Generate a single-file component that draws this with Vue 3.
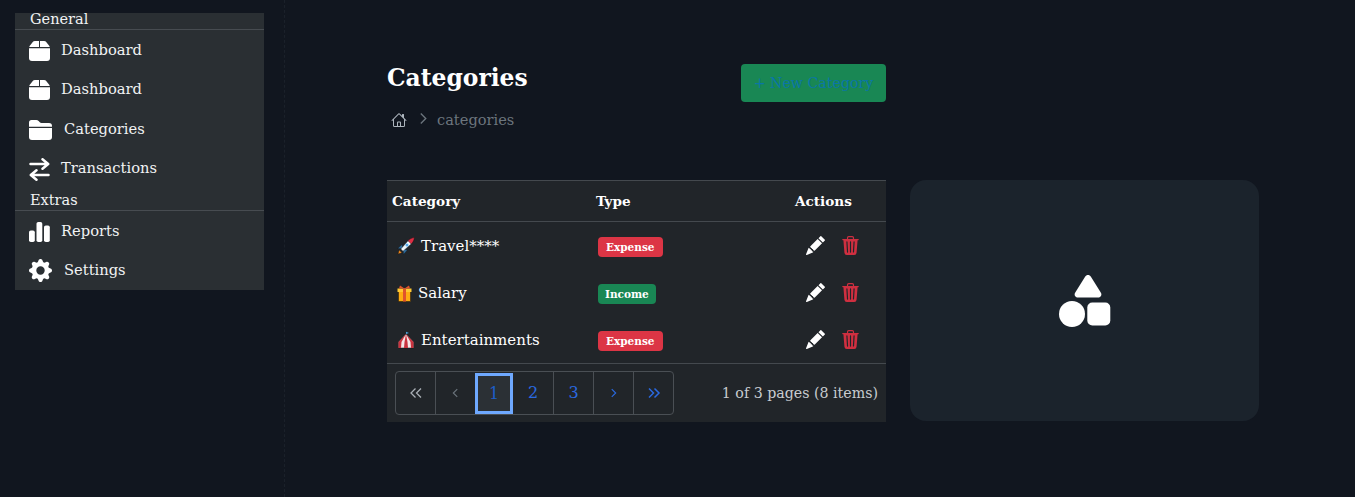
<script setup>
const menuGeneral = [
  { label: 'Dashboard', icon: 'box' },
  { label: 'Dashboard', icon: 'box' },
  { label: 'Categories', icon: 'folder' },
  { label: 'Transactions', icon: 'swap' },
]
const menuExtras = [
  { label: 'Reports', icon: 'bars' },
  { label: 'Settings', icon: 'gear' },
]
const rows = [
  { emoji: 'rocket', name: 'Travel****', type: 'Expense' },
  { emoji: 'gift', name: 'Salary', type: 'Income' },
  { emoji: 'tent', name: 'Entertainments', type: 'Expense' },
]
</script>

<template>
  <div class="page">
    <aside class="side">
      <nav class="menu">
        <div class="menu-title first">General</div>
        <a v-for="(m, i) in menuGeneral" :key="i" class="menu-item" :class="m.icon">
          <svg v-if="m.icon === 'box'" class="menu-icon" viewBox="0 0 21 20" fill="currentColor">
            <path d="M4.200.6C4.600.2 5.200 0 5.800 0H10v6H.3c.1-.7.400-1.300.9-1.800z" />
            <path d="M11 0h4.200c.6 0 1.200.2 1.600.6l3 3.600c.5.5.8 1.100.9 1.800H11z" />
            <path d="M0 7.200h21V17a3 3 0 0 1-3 3H3a3 3 0 0 1-3-3z" />
          </svg>
          <svg v-else-if="m.icon === 'folder'" class="menu-icon" viewBox="0 0 23 20" fill="currentColor">
            <path d="M0 2.500A2.500 2.500 0 0 1 2.500 0h4.800c.9 0 1.700.4 2.300 1l1.200 1.300c.4.500 1 .7 1.600.7h7.600A3 3 0 0 1 23 6v.8H0z" />
            <path d="M0 8h23v9a3 3 0 0 1-3 3H3a3 3 0 0 1-3-3z" />
          </svg>
          <svg v-else class="menu-icon" viewBox="0 0 21 23" fill="none" stroke="currentColor" stroke-width="2.500" stroke-linecap="round" stroke-linejoin="round">
            <path d="M1.500 6h17.500M13.500 1.300 19.200 6l-5.700 4.700" />
            <path d="M19.500 17H2M7.500 12.300 1.800 17l5.700 4.700" />
          </svg>
          <span>{{ m.label }}</span>
        </a>
        <div class="menu-title">Extras</div>
        <a v-for="(m, i) in menuExtras" :key="i" class="menu-item" :class="m.icon">
          <svg v-if="m.icon === 'bars'" class="menu-icon" viewBox="0 0 21 20" fill="currentColor">
            <rect x="0" y="8.500" width="5.800" height="11.500" rx="1.800" />
            <rect x="7.500" y="0" width="5.800" height="20" rx="1.800" />
            <rect x="15" y="3.500" width="5.800" height="16.500" rx="1.800" />
          </svg>
          <svg v-else class="menu-icon" viewBox="0 0 16 16" fill="currentColor">
            <path d="M9.405 1.050c-.413-1.400-2.397-1.400-2.810 0l-.1.340a1.464 1.464 0 0 1-2.105.872l-.31-.17c-1.283-.698-2.686.705-1.987 1.987l.169.311c.446.820.023 1.841-.872 2.105l-.34.100c-1.400.413-1.400 2.397 0 2.810l.34.100a1.464 1.464 0 0 1 .872 2.105l-.17.310c-.698 1.283.705 2.686 1.987 1.987l.311-.169a1.464 1.464 0 0 1 2.105.872l.1.340c.413 1.400 2.397 1.400 2.810 0l.1-.340a1.464 1.464 0 0 1 2.105-.872l.31.170c1.283.698 2.686-.705 1.987-1.987l-.169-.311a1.464 1.464 0 0 1 .872-2.105l.34-.100c1.400-.413 1.400-2.397 0-2.810l-.34-.100a1.464 1.464 0 0 1-.872-2.105l.17-.310c.698-1.283-.705-2.686-1.987-1.987l-.311.169a1.464 1.464 0 0 1-2.105-.872l-.1-.340zM8 10.930a2.929 2.929 0 1 1 0-5.860 2.929 2.929 0 0 1 0 5.858z" />
          </svg>
          <span>{{ m.label }}</span>
        </a>
      </nav>
    </aside>

    <main class="content">
      <div class="list-col">
        <header class="head">
          <div>
            <h1 class="title">Categories</h1>
            <div class="crumbs">
              <svg class="home" viewBox="0 0 16 16" fill="currentColor">
                <path d="M8.707 1.500a1 1 0 0 0-1.414 0L.646 8.146a.5.5 0 0 0 .708.708L2 8.207V13.500A1.500 1.500 0 0 0 3.500 15h9a1.500 1.500 0 0 0 1.500-1.500V8.207l.646.647a.5.5 0 0 0 .708-.708L13 5.793V2.500a.5.5 0 0 0-.5-.5h-1a.5.5 0 0 0-.5.5v1.293L8.707 1.500ZM13 7.207V13.500a.5.5 0 0 1-.5.5H10v-3.500a1 1 0 0 0-1-1H7a1 1 0 0 0-1 1V14H3.500a.5.5 0 0 1-.5-.5V7.207l5-5 5 5ZM9 14H7v-3.500h2V14Z" />
              </svg>
              <svg class="sep" viewBox="0 0 10 14" fill="none" stroke="currentColor" stroke-width="1.500">
                <path d="M2 1.500 7.500 7 2 12.500" />
              </svg>
              <span>categories</span>
            </div>
          </div>
          <button class="new-btn">+ New Category</button>
        </header>

        <section class="table-wrap">
          <table class="grid">
            <colgroup>
              <col class="c1" />
              <col class="c2" />
              <col />
            </colgroup>
            <thead>
              <tr>
                <th>Category</th>
                <th>Type</th>
                <th>Actions</th>
              </tr>
            </thead>
            <tbody>
              <tr v-for="r in rows" :key="r.name">
                <td class="name-cell">
                  <svg v-if="r.emoji === 'rocket'" class="emoji" viewBox="0 0 18 18">
                    <path d="M1 17l1.200-4 2.800 2.800z" fill="#f28a1e" stroke="#111" stroke-width=".4" />
                    <path d="M.6 11.500 5 7.500l1 4.500zM6.500 17.400l4-4.400-4.500-1z" fill="#2f6d9e" stroke="#111" stroke-width=".4" />
                    <path d="M3.800 12 11 3.800 14.200 3.800 14.200 7 6 14.200z" fill="#eef6fb" stroke="#111" stroke-width=".4" />
                    <path d="M11 3.800C12.500 2 15 .8 17.400.6 17.200 3 16 5.500 14.200 7z" fill="#dd2e44" stroke="#111" stroke-width=".4" />
                    <circle cx="10" cy="8" r="1.500" fill="#55acee" />
                  </svg>
                  <svg v-else-if="r.emoji === 'gift'" class="emoji gift" viewBox="0 0 15 18">
                    <rect x="1.500" y="7" width="12" height="10.500" fill="#ffac12" stroke="#201405" stroke-width=".5" />
                    <rect x=".5" y="4.500" width="14" height="3.500" fill="#ffc933" />
                    <rect x="6" y="4.500" width="3" height="13" fill="#e0532d" />
                    <path d="M7.500 4.500 3 1.500 2 4.500zM7.500 4.500 12 1.500l1 3z" fill="#e0532d" />
                  </svg>
                  <svg v-else class="emoji" viewBox="0 0 18 18">
                    <path d="M9 3 16.500 11v6h-15v-6z" fill="#f3e6e6" stroke="#111" stroke-width=".5" />
                    <path d="M9 3 4.500 11 4 17H1.500v-6zM9 3 13.500 11l.5 6h2.500v-6zM9 3 7.500 11 7 17h4l-.5-6z" fill="#c8333f" />
                    <path d="M9 3V.8l3 1.200-3 1" fill="#4aa8dd" />
                  </svg>
                  <span>{{ r.name }}</span>
                </td>
                <td>
                  <span class="badge" :class="r.type === 'Income' ? 'income' : 'expense'">{{ r.type }}</span>
                </td>
                <td>
                  <div class="actions">
                    <svg class="act edit" viewBox="0 0 16 16" fill="currentColor">
                      <path d="M12.854.146a.5.5 0 0 0-.707 0L10.500 1.793 14.207 5.500l1.647-1.646a.5.5 0 0 0 0-.708l-3-3zm.646 6.061L9.793 2.500 3.293 9H3.500a.5.5 0 0 1 .5.5v.5h.5a.5.5 0 0 1 .5.5v.5h.5a.5.5 0 0 1 .5.5v.5h.5a.5.5 0 0 1 .5.5v.207l6.500-6.500zm-7.468 7.468A.5.5 0 0 1 6 13.500V13h-.5a.5.5 0 0 1-.5-.5V12h-.5a.5.5 0 0 1-.5-.5V11h-.5a.5.5 0 0 1-.5-.5V10h-.5a.499.499 0 0 1-.175-.032l-.179.178a.5.5 0 0 0-.11.168l-2 5a.5.5 0 0 0 .65.65l5-2a.5.5 0 0 0 .168-.11l.178-.178z" />
                    </svg>
                    <svg class="act del" viewBox="0 0 16 16" fill="currentColor">
                      <path d="M11 1.500v1h3.500a.5.5 0 0 1 0 1h-.538l-.853 10.660A2 2 0 0 1 11.115 16h-6.230a2 2 0 0 1-1.994-1.840L2.038 3.500H1.500a.5.5 0 0 1 0-1H5v-1A1.500 1.500 0 0 1 6.500 0h3A1.500 1.500 0 0 1 11 1.500Zm-5 0v1h4v-1a.5.5 0 0 0-.5-.5h-3a.5.5 0 0 0-.5.5ZM4.500 5.029l.5 8.500a.5.5 0 1 0 .998-.06l-.5-8.500a.5.5 0 1 0-.998.06Zm6.530-.528a.5.5 0 0 0-.528.47l-.5 8.500a.5.5 0 0 0 .998.058l.5-8.500a.5.5 0 0 0-.47-.528ZM8 4.500a.5.5 0 0 0-.5.5v8.500a.5.5 0 0 0 1 0V5a.5.5 0 0 0-.5-.5Z" />
                    </svg>
                  </div>
                </td>
              </tr>
            </tbody>
          </table>
          <footer class="foot">
            <div class="pager">
              <span class="pg grey">
                <svg viewBox="0 0 14 12" fill="none" stroke="currentColor" stroke-width="1.300"><path d="M6.500 1.500 2 6l4.500 4.500M12 1.500 7.500 6l4.500 4.500" /></svg>
              </span>
              <span class="pg dim">
                <svg class="single" viewBox="0 0 8 12" fill="none" stroke="currentColor" stroke-width="1.300"><path d="M6 1.500 1.500 6 6 10.500" /></svg>
              </span>
              <span class="pg active">1</span>
              <span class="pg first-num">2</span>
              <span class="pg">3</span>
              <span class="pg">
                <svg class="single" viewBox="0 0 8 12" fill="none" stroke="currentColor" stroke-width="1.300"><path d="M2 1.500 6.500 6 2 10.500" /></svg>
              </span>
              <span class="pg">
                <svg viewBox="0 0 14 12" fill="none" stroke="currentColor" stroke-width="1.500"><path d="M2 1.500 6.500 6 2 10.500M7.500 1.500 12 6l-4.500 4.500" /></svg>
              </span>
            </div>
            <span class="pages">1 of 3 pages (8 items)</span>
          </footer>
        </section>
      </div>

      <section class="promo">
        <svg class="shapes" viewBox="0 0 52 52" fill="#fff">
          <path transform="translate(3 0)" d="M26 0c1.200 0 2.200.6 2.900 1.700l10 16c1.300 2.200-.2 4.800-2.700 4.800h-20.400c-2.500 0-4-2.600-2.700-4.800l10-16C23.800.6 24.800 0 26 0z" />
          <circle cx="13" cy="39" r="13" />
          <rect x="28.300" y="27.500" width="23" height="23" rx="5" />
        </svg>
      </section>
    </main>
  </div>
</template>

<style scoped>
.page {
  display: flex;
  align-items: flex-start;
  min-height: 497px;
  background: #11161f;
  color: #fff;
  font-family: "Roboto Slab", "DejaVu Serif", serif;
  overflow: hidden;
}
.side {
  width: 285px;
  flex-shrink: 0;
  box-sizing: border-box;
  padding: 13px 20px 0 15px;
  border-right: 1px dashed #1b212a;
  height: 497px;
}
.menu {
  background: #2a2f33;
  height: 277px;
  overflow: hidden;
  display: flex;
  flex-direction: column;
}
.menu-title {
  font-size: 14.500px;
  line-height: 20px;
  height: 21px;
  flex-shrink: 0;
  box-sizing: border-box;
  padding-left: 15px;
  margin-top: 2px;
  border-bottom: 1px solid #474c51;
  color: #f1f3f4;
}
.menu-title.first {
  height: 17px;
  line-height: 13px;
  margin-top: 0;
}
.menu-item {
  display: flex;
  align-items: center;
  gap: 11px;
  height: 39.500px;
  flex-shrink: 0;
  padding-left: 14px;
  font-size: 14.700px;
  color: #f1f3f4;
}
.menu-item span {
  margin-top: -1px;
}
.menu-item.folder,
.menu-item.gear {
  gap: 12px;
}
.menu-icon {
  width: 21px;
  height: 20px;
  margin-top: 2px;
  color: #fff;
}
.folder .menu-icon {
  width: 23px;
}
.swap .menu-icon {
  height: 23px;
}
.gear .menu-icon {
  width: 23px;
  height: 23px;
  margin-top: 0;
}
.content {
  display: flex;
  gap: 24px;
  padding: 64px 0 0 102px;
  align-items: flex-start;
}
.list-col {
  width: 499px;
}
.head {
  display: flex;
  justify-content: space-between;
  align-items: flex-start;
  height: 116px;
}
.title {
  margin: 0;
  font-size: 23.400px;
  line-height: 29px;
  font-weight: 700;
}
.crumbs {
  display: flex;
  align-items: center;
  margin: 18px 0 0 4px;
  font-size: 14.600px;
  color: #6c757d;
}
.home {
  width: 16px;
  height: 16px;
  margin-right: 12px;
  color: #adb5bd;
}
.sep {
  width: 9px;
  height: 13px;
  margin: -3px 9px 0 0;
}
.new-btn {
  width: 145px;
  height: 38px;
  border: none;
  border-radius: 4px;
  background: #198754;
  color: #0a76a6;
  font-family: inherit;
  font-size: 14.200px;
  padding: 0;
}
.table-wrap {
  background: #212529;
}
.grid {
  width: 100%;
  table-layout: fixed;
  border-collapse: collapse;
  font-size: 14px;
}
.c1 {
  width: 204px;
}
.c2 {
  width: 199px;
}
.grid th {
  text-align: left;
  font-weight: 700;
  font-size: 13.600px;
  height: 41px;
  padding: 0 0 0 5px;
  border-top: 1px solid #44494e;
  border-bottom: 1px solid #44494e;
  box-sizing: border-box;
}
.grid td {
  height: 47px;
  padding: 0 0 0 7px;
  box-sizing: border-box;
}
.name-cell span {
  vertical-align: middle;
}
.grid td.name-cell {
  padding-left: 10px;
  font-size: 15px;
}
.emoji {
  width: 18px;
  height: 18px;
  margin-right: 6px;
  vertical-align: middle;
}
.emoji.gift {
  width: 15px;
}
.badge {
  display: inline-block;
  font-size: 10.500px;
  font-weight: 700;
  line-height: 20px;
  height: 20px;
  margin-top: 3px;
  padding: 0 8px;
  border-radius: 4px;
}
.expense {
  background: #dc3545;
}
.income {
  background: #198754;
  padding: 0 7px;
}
.actions {
  display: flex;
  align-items: center;
  gap: 16px;
  padding-left: 9px;
}
.act {
  width: 19px;
  height: 19px;
}
.edit {
  color: #fff;
}
.del {
  color: #cf2f40;
}
.foot {
  height: 59px;
  border-top: 1px solid #44494e;
  display: flex;
  align-items: center;
  justify-content: space-between;
  padding: 0 8px;
  box-sizing: border-box;
}
.pager {
  display: flex;
  height: 44px;
  box-sizing: border-box;
  border: 1px solid #4a4f54;
  border-radius: 4px;
}
.pg {
  width: 40px;
  box-sizing: border-box;
  display: flex;
  align-items: center;
  justify-content: center;
  color: #2a69e0;
  font-size: 16px;
  border-left: 1px solid #4a4f54;
}
.pg:first-child {
  width: 39px;
  border-left: none;
}
.pg svg {
  width: 14px;
  height: 12px;
}
.pg svg.single {
  width: 7px;
}
.grey {
  color: #a9afb5;
}
.dim {
  color: #6c757d;
}
.pg.active {
  width: 38px;
  margin: 1px 0 0;
  border: 3px solid #6ea8fe;
  background: #2b3035;
  color: #1d5ec9;
}
.first-num {
  border-left: none;
}
.pages {
  font-size: 14.200px;
  color: #c8ccd0;
}
.promo {
  width: 349px;
  height: 241px;
  margin-top: 116px;
  border-radius: 16px;
  background: #1b232c;
  display: flex;
  align-items: center;
  justify-content: center;
}
.shapes {
  width: 52px;
  height: 52px;
}
</style>
